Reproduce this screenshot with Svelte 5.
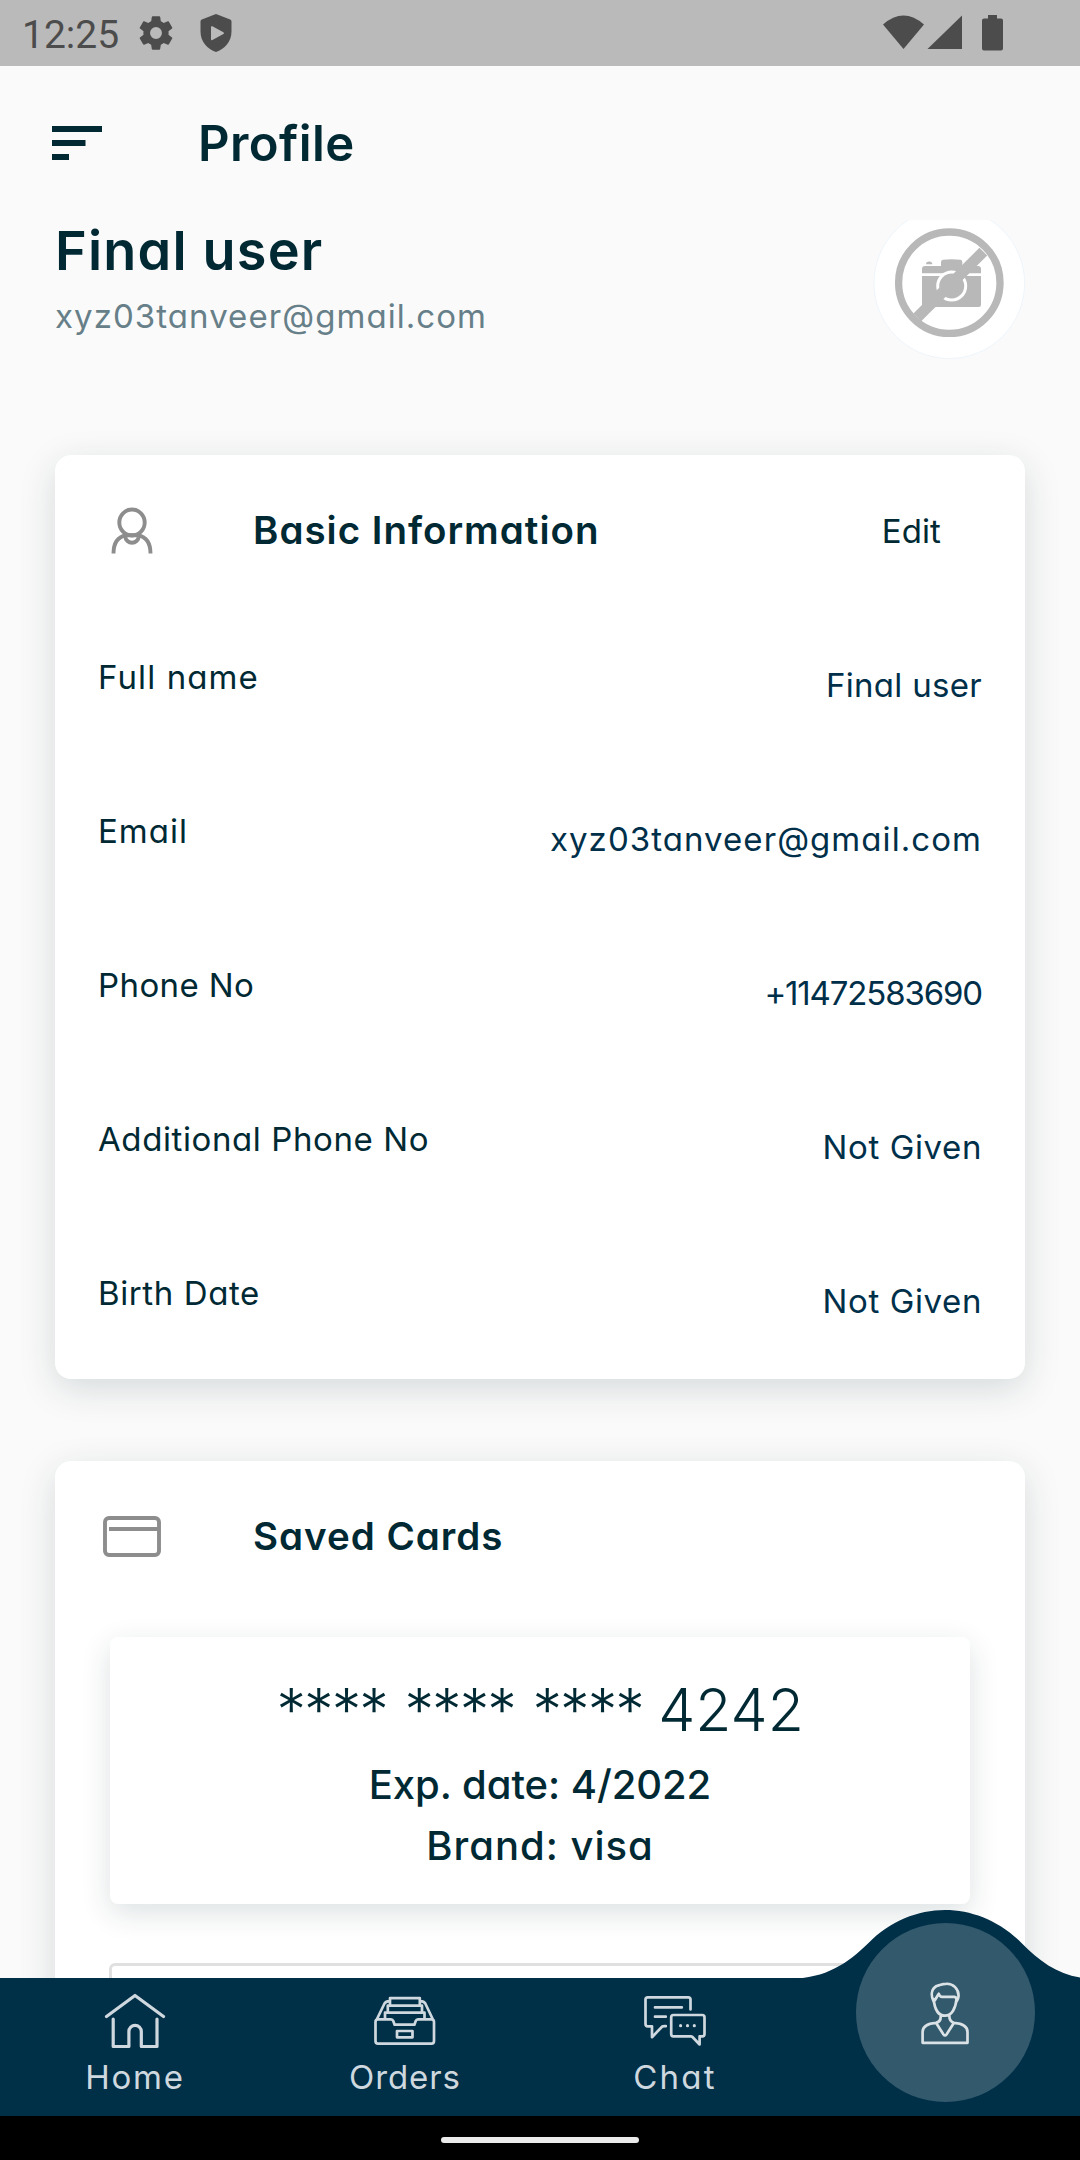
<script>
  const details = [
    { label: 'Full name', value: 'Final user', labelTrack: 1.1, valueTrack: 0.3 },
    { label: 'Email', value: 'xyz03tanveer@gmail.com', labelTrack: 1, valueTrack: 1.06 },
    { label: 'Phone No', value: '+11472583690', labelTrack: 0.4, valueTrack: -1.15 },
    { label: 'Additional Phone No', value: 'Not Given', labelTrack: 0.6, valueTrack: 0.6 },
    { label: 'Birth Date', value: 'Not Given', labelTrack: 0.6, valueTrack: 0.6 }
  ];
</script>

<div class="screen">
  <header class="status">
    <span class="time">12:25</span>
    <svg class="gear" viewBox="0 0 24 24"><path d="M19.14 12.94c.04-.3.06-.61.06-.94 0-.32-.02-.64-.07-.94l2.03-1.58c.18-.14.23-.41.12-.61l-1.92-3.32c-.12-.22-.37-.29-.59-.22l-2.39.96c-.5-.38-1.03-.7-1.62-.94l-.36-2.54c-.04-.24-.24-.41-.48-.41h-3.84c-.24 0-.43.17-.47.41l-.36 2.54c-.59.24-1.13.57-1.62.94l-2.39-.96c-.22-.08-.47 0-.59.22L2.74 8.87c-.12.21-.08.47.12.61l2.03 1.58c-.05.3-.09.63-.09.94s.02.64.07.94l-2.03 1.58c-.18.14-.23.41-.12.61l1.92 3.32c.12.22.37.29.59.22l2.39-.96c.5.38 1.03.7 1.62.94l.36 2.54c.05.24.24.41.48.41h3.84c.24 0 .44-.17.47-.41l.36-2.54c.59-.24 1.13-.56 1.62-.94l2.39.96c.22.08.47 0 .59-.22l1.92-3.32c.12-.22.07-.47-.12-.61zM12 15.4A3.4 3.4 0 1 1 12 8.600a3.4 3.4 0 0 1 0 6.8z" /></svg>
    <svg class="shield" viewBox="0 0 32 38"><path fill-rule="evenodd" d="M16 0 30.200 5.500Q31.500 6.100 31.500 7.500V17.500C31.500 28 24.500 35 16 38 7.500 35 .5 28 .5 17.500V7.500Q.5 6.100 1.800 5.500ZM11 13.200V25.200Q11 26.700 12.400 26L23.400 20.100Q24.800 19.200 23.400 18.300L12.400 12.300Q11 11.700 11 13.200Z" /></svg>
    <svg class="signals" viewBox="0 0 120 38">
      <path d="M0 10.500Q20.500-7.500 41 10.500L20.500 35Z" />
      <path d="M79 1.500V35H44.500Z" />
      <path d="M105 1H114V4.500H118Q120 4.500 120 6.500V34.500Q120 36.500 118 36.500H101Q99 36.500 99 34.500V6.500Q99 4.500 101 4.500H105Z" />
    </svg>
  </header>

  <main>
    <div class="appbar">
      <svg class="menu" viewBox="0 0 50 34"><path d="M0 0H50V6H0ZM0 14H33.500V20H0ZM0 28H17V34H0Z" /></svg>
      <h1>Profile</h1>
    </div>

    <section class="identity">
      <div>
        <h2>Final user</h2>
        <p class="mail">xyz03tanveer@gmail.com</p>
      </div>
      <svg class="avatar" viewBox="0 0 152 139">
        <circle cx="76.300" cy="63.200" r="75.300" fill="#fff" stroke="#e3f0fa" stroke-width="0.600" />
        <g fill="#b8b8b8">
          <path d="M52 46H68V42Q68 40 70 39.800Q79 38.600 87.500 39.800Q89.300 40 89.300 42V46H105Q108 46 108 49V84.500Q108 87 105.500 87H51.500Q49 87 49 84.500V49Q49 46 52 46Z" />
          <path d="M53 44.300Q53 41.600 56.200 41.600T59.300 44.300Z" />
        </g>
        <path d="M49 54.700H70M92 54.700H108" stroke="#fff" stroke-width="2.800" />
        <circle cx="78.700" cy="66" r="14" fill="none" stroke="#fff" stroke-width="3" />
        <path d="M44.300 97.300 110.300 31.700" stroke="#b8b8b8" stroke-width="11" />
        <circle cx="76.300" cy="62.700" r="50.700" fill="none" stroke="#b8b8b8" stroke-width="7.300" />
      </svg>
    </section>

    <section class="card">
      <div class="card-head">
        <svg class="head-icon" viewBox="0 0 64 64">
          <ellipse cx="32" cy="24.500" rx="12.700" ry="13" />
          <path d="M13.500 55.500C13.500 46 17.500 39 26 37.200H38C46.500 39 50.500 46 50.500 55.500M25 37.800C26 47 38 47 39 37.800" />
        </svg>
        <h3>Basic Information</h3>
        <span class="edit">Edit</span>
      </div>
      {#each details as d}
        <div class="row">
          <span class="label" style:letter-spacing="{d.labelTrack}px">{d.label}</span>
          <span class="value" style:letter-spacing="{d.valueTrack}px">{d.value}</span>
        </div>
      {/each}
    </section>

    <section class="card saved">
      <div class="card-head">
        <svg class="head-icon" viewBox="0 0 64 64">
          <rect x="5" y="14" width="54" height="37" rx="4" />
          <path d="M9 25H59" />
        </svg>
        <h3>Saved Cards</h3>
      </div>
      <div class="pay-card">
        <div class="number"><span>****</span><span>****</span><span>****</span><b>4242</b></div>
        <p class="exp">Exp. date: 4/2022</p>
        <p class="brand">Brand: visa</p>
      </div>
      <div class="outlined"></div>
    </section>
  </main>

  <nav>
    <svg class="bump" viewBox="0 0 290 70"><path d="M0 68.600C36 68.600 58 53 78 33.500C100 11 128 0 155 0S210 11 232 33.500C248 50 267 64 290 67.500V70H0Z" /></svg>
    <div class="tab">
      <svg viewBox="0 0 64 64" class="thick"><path d="M3.500 26.500 32 5.500 60.500 26.500M10.200 29V56.500H25.900V41.500a6.200 6.200 0 0 1 12.400 0V56.500H54V29" /></svg>
      <span class="home">Home</span>
    </div>
    <div class="tab">
      <svg viewBox="0 0 64 64"><path d="M5 29.300H18Q19.600 29.300 20.300 31L21.600 34.700H41.400L42.700 31Q43.400 29.300 45 29.300H58.500Q61 29.300 61 32V51Q61 53.600 58.500 53.600H5Q2.500 53.600 2.500 51V32Q2.500 29.300 5 29.300ZM24 41H39.500V47.300H24ZM12 29V22.700H51.500V29M14.800 22.500V15.700H49V22.500M17 15.500V8.200H46.800V15.500M4 29 11.500 13.500Q13 11 17 11.200M59.700 29 52.300 13.500Q50.800 11 46.800 11.200" /></svg>
      <span class="orders">Orders</span>
    </div>
    <div class="tab">
      <svg viewBox="0 0 64 64"><path d="M47.500 19.500V9.500Q47.500 7.300 45.300 7.300H4.800Q2.500 7.300 2.500 9.500V34Q2.500 36.300 4.800 36.300H9V47.200L19 36.700Q20 36 22.800 36.200M12 17.400H38.800M12 26.700H22.800M30.300 25H59.300Q61.500 25 61.500 27.200V44Q61.500 46.300 59.300 46.300H56.600V54.500L49.500 47Q48.800 46.300 47.800 46.300H30.300Q28.200 46.300 28.200 44V27.200Q28.200 25 30.300 25Z" /><path stroke-width="3.200" d="M37.600 35.700h.01M44.500 35.700h.01M51.300 35.700h.01" /></svg>
      <span class="chat">Chat</span>
    </div>
    <div class="tab">
      <div class="active">
        <svg viewBox="0 0 64 64"><path d="M20.600 20.500C17.500 14 18.500 8 23.500 5 26.500 4.500 29 2.800 33 2.800 40 2.300 46 8 45.500 15.500 45.300 18 44.300 19 43.500 20.500M20.600 18C21.500 27 25 34.700 32 34.700S42.700 27 43.500 18M20.800 20.500C22.500 19 23.800 15.500 25.800 12.800 26.200 14.500 27 15.900 29 15.900H41.500Q43.500 16.300 43.500 18.500M27.700 34.500C28 38 26.500 41 23 41.800 14 42.500 9.600 45 9.600 51V61.800H54.500V51C54.500 45 50 42.500 41 41.800 37.500 41 36.300 38 36.300 34.500M23 41.800 30.500 53.500Q32 55.500 33.500 53.500L41 41.800" /></svg>
      </div>
    </div>
  </nav>
  <footer><i></i></footer>
</div>

<style>
  :global(body) { background: #fafafa; }
  .screen {
    width: 1080px;
    height: 2160px;
    display: flex;
    flex-direction: column;
    overflow: hidden;
    background: #fafafa;
    color: #002933;
    font-family: Inter, 'Open Sans', sans-serif;
    font-feature-settings: 'cv11';
    font-size: 33px;
    font-weight: 400;
  }
  h1, h2, h3, p { margin: 0; font-weight: 600; }
  svg { display: block; flex: none; }

  .status {
    height: 66px;
    flex: none;
    display: flex;
    align-items: center;
    background: #bababa;
    fill: #4c4c4c;
    color: #4c4c4c;
    box-sizing: border-box;
    padding: 0 77px 0 22px;
  }
  .time { width: 113px; font: 400 39px/66px Roboto, sans-serif; padding-top: 3px; box-sizing: border-box; }
  .gear { width: 42px; height: 42px; }
  .shield { width: 32px; height: 38px; margin-left: 23px; }
  .signals { width: 120px; height: 38px; margin-left: auto; }

  main { flex: 1; min-height: 0; overflow: hidden; }
  .appbar { height: 154px; display: flex; align-items: center; padding-left: 52px; }
  .menu { width: 50px; height: 34px; fill: #002933; }
  h1 { margin-left: 96px; font-size: 49px; letter-spacing: 0.4px; }

  .identity { height: 235px; display: flex; justify-content: space-between; padding: 0 55px; }
  h2 { font-size: 54px; line-height: 61px; letter-spacing: 1.2px; }
  .mail { line-height: 71px; font-weight: 400; letter-spacing: 1.06px; color: #677f88; }
  .avatar { width: 152px; height: 139px; }

  .card {
    margin: 0 55px;
    padding-bottom: 4px;
    background: #fff;
    border-radius: 16px;
    box-shadow: 0 10px 36px rgba(0, 40, 48, 0.15);
  }
  .card-head { height: 150px; display: flex; align-items: center; padding: 0 84px 0 45px; }
  .head-icon { width: 64px; height: 64px; fill: none; stroke: #8d8d8d; stroke-width: 3.9; }
  h3 { margin-left: 89px; font-size: 38.5px; letter-spacing: 1px; }
  .edit { margin-left: auto; padding-top: 2px; letter-spacing: 0.1px; }
  .row { height: 154px; display: flex; align-items: center; justify-content: space-between; padding: 0 43px; }
  .label { padding-bottom: 10px; }
  .value { padding-top: 6px; color: #002f4a; }

  .saved { margin-top: 82px; height: 600px; }
  .pay-card {
    height: 239px;
    margin: 26px 55px 59px;
    padding-top: 28px;
    border-radius: 8px;
    background: #fff;
    box-shadow: 0 9px 30px rgba(0, 40, 48, 0.14);
    text-align: center;
  }
  .number { display: flex; justify-content: center; gap: 21px; padding-left: 2px; font-size: 59px; font-weight: 300; line-height: 89px; }
  .number span { width: 107px; letter-spacing: -1.9px; display: flex; justify-content: center; }
  .number b { font-weight: 300; margin-left: -4px; }
  .exp, .brand { font-size: 40px; font-weight: 500; line-height: 61px; }
  .exp { letter-spacing: -0.05px; }
  .brand { letter-spacing: 1px; }
  .outlined { height: 120px; margin: 0 54px; border: 3px solid #e0e0e0; border-radius: 6px; box-sizing: border-box; }

  nav {
    position: relative;
    height: 138px;
    flex: none;
    display: grid;
    grid-template-columns: repeat(4, 1fr);
    background: #002f48;
    color: #ced8de;
  }
  .bump { position: absolute; right: 0; top: -68.5px; width: 290px; height: 70px; fill: #002f48; }
  .tab { display: flex; flex-direction: column; align-items: center; padding-top: 12px; line-height: 47px; }
  .tab svg { width: 64px; height: 64px; fill: none; stroke: #ced8de; stroke-width: 2.7; stroke-linecap: round; stroke-linejoin: round; }
  .tab svg.thick { stroke-width: 3.2; }
  .home { letter-spacing: 1.8px; }
  .orders { letter-spacing: 0.9px; }
  .chat { letter-spacing: 2.2px; }
  .active {
    position: absolute;
    top: -55px;
    width: 179px;
    height: 179px;
    border-radius: 50%;
    background: #33596c;
    display: flex;
    align-items: center;
    justify-content: center;
  }
  .active svg { stroke: #dbe2e6; }

  footer { height: 44px; flex: none; display: flex; align-items: center; justify-content: center; background: #000; }
  footer i { width: 198px; height: 6px; border-radius: 3px; background: #ebebeb; margin-top: 4px; }
</style>
